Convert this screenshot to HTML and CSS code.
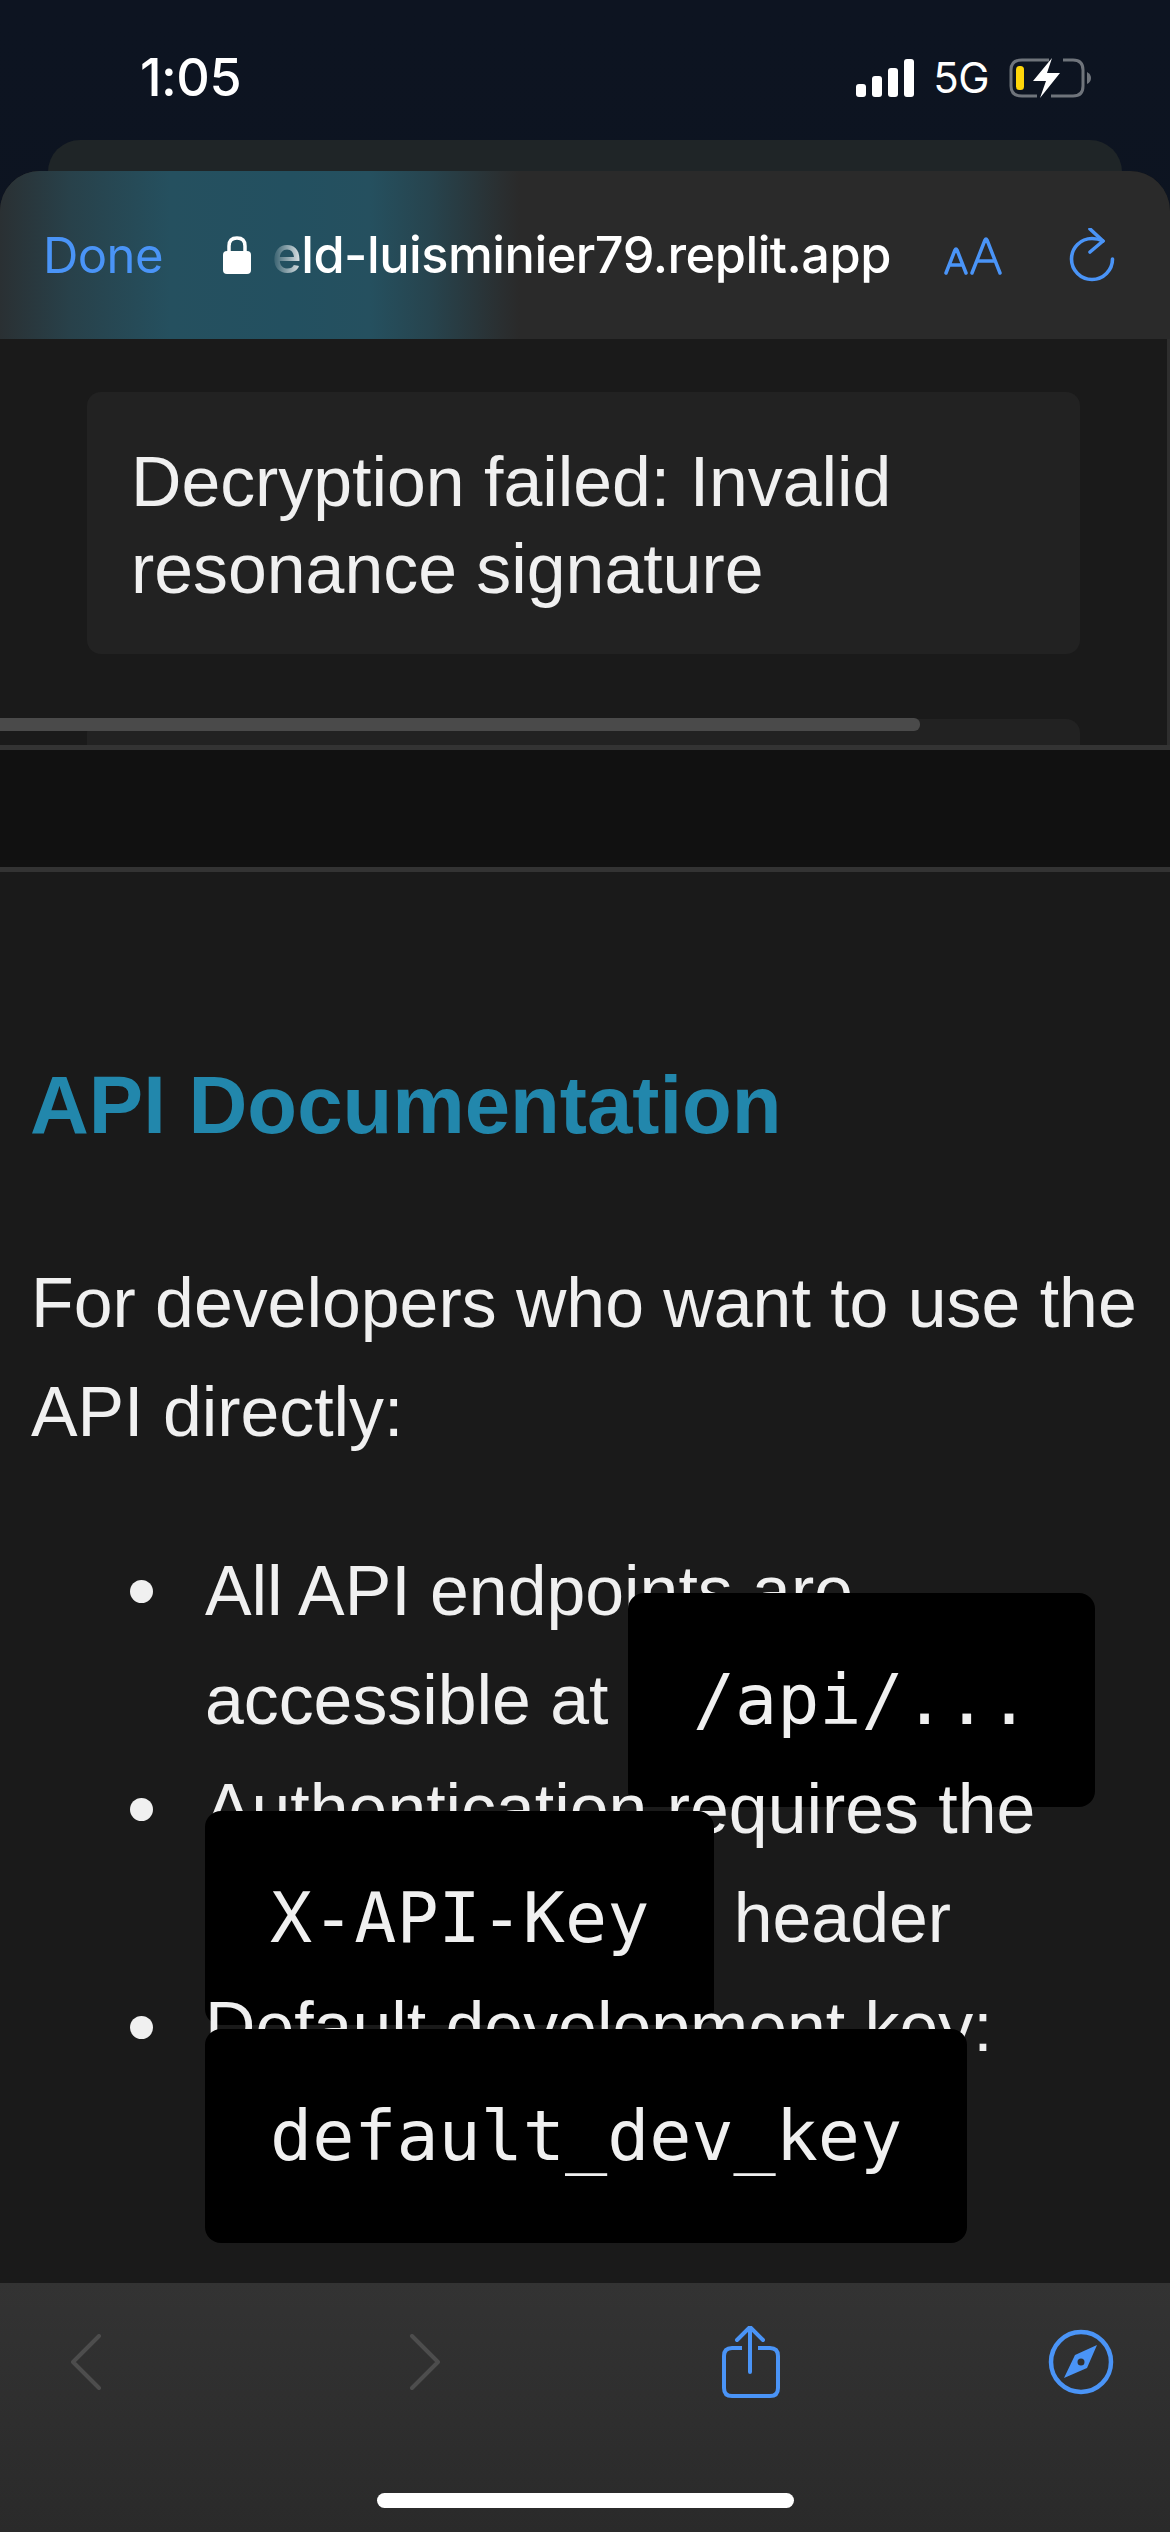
FILE: index.html
```html
<!DOCTYPE html>
<html>
<head>
  <meta charset="utf-8">
  <title>API Documentation</title>
  <link rel="stylesheet" href="styles.css">
</head>

<body>
<div class="phone">

  <div class="status">
    <span class="time">1:05</span>
    <div class="status-right">
      <svg class="signal" width="58" height="38" viewBox="0 0 58 38">
        <rect x="0" y="25" width="10" height="13" rx="3"/>
        <rect x="16" y="17" width="10" height="21" rx="3"/>
        <rect x="32" y="9" width="10" height="29" rx="3"/>
        <rect x="48" y="0" width="10" height="38" rx="3"/>
      </svg>
      <span class="net">5G</span>
      <svg class="battery" width="82" height="40" viewBox="0 0 82 40">
        <path d="M28 38H13Q2 38 2 28V12Q2 2 13 2H40M54 2H64Q74 2 74 12V28Q74 38 64 38H42" fill="none" stroke="#6f747b" stroke-width="3"/>
        <path d="M78 14Q82 16 82 20Q82 24 78 26Z" fill="#6f747b"/>
        <rect x="7" y="8" width="8" height="24" rx="3.5" fill="#ffd60a"/>
        <path d="M43 0L24 23H37L31 40L51 15H38Z" fill="#fff"/>
      </svg>
    </div>
  </div>
  <div class="peek"></div>

  <div class="sheet">
    <div class="navbar">
      <div class="glow"></div>
      <span class="done">Done</span>
      <div class="address">
        <svg class="lock" width="28" height="38" viewBox="0 0 28 38">
          <path d="M6 17V10Q6 2 14 2Q22 2 22 10V17" fill="none" stroke="#fff" stroke-width="3.5"/>
          <rect x="0" y="15" width="28" height="23" rx="4" fill="#fff"/>
        </svg>
        <div class="url-clip"><span class="url">eld-luisminier79.replit.app</span></div>
      </div>
      <svg class="aa" width="58" height="38" viewBox="0 0 58 38">
        <path d="M2 36L11 13Q12 11 13 13L22 36M6 28H18" fill="none" stroke="#4a94f7" stroke-width="3.5" stroke-linecap="round" stroke-linejoin="round"/>
        <path d="M28 36L41 3Q42 1 43 3L56 36M33 24H51" fill="none" stroke="#4a94f7" stroke-width="3.5" stroke-linecap="round" stroke-linejoin="round"/>
      </svg>
      <svg class="reload" width="46" height="54" viewBox="0 0 46 54">
        <path d="M43.5 31A20.5 20.5 0 1 1 23 10.5Q29 10.5 34 13" fill="none" stroke="#4a94f7" stroke-width="3.6" stroke-linecap="round"/>
        <path d="M21 1L34 13L21 24" fill="none" stroke="#4a94f7" stroke-width="3.6" stroke-linecap="round" stroke-linejoin="round"/>
      </svg>
    </div>

    <main class="content">
      <div class="result-pane">
        <div class="result-card">Decryption failed: Invalid resonance signature</div>
        <div class="result-card next"></div>
        <div class="scrollbar"></div>
      </div>
      <div class="band"></div>

      <h2 class="doc-title">API Documentation</h2>
      <p class="doc-text">For developers who want to use the API directly:</p>
      <ul class="doc-list">
        <li>All API endpoints are accessible at <code>/api/...</code></li>
        <li>Authentication requires the <code>X-API-Key</code> header</li>
        <li>Default development key: <code>default_dev_key</code></li>
      </ul>
    </main>

    <div class="toolbar">
      <div class="tool-icons">
        <svg class="tool-back" width="32" height="56" viewBox="0 0 32 56">
          <path d="M29 2L3 28L29 54" fill="none" stroke="#4d4d4d" stroke-width="4" stroke-linecap="round" stroke-linejoin="round"/>
        </svg>
        <svg class="tool-forward" width="32" height="56" viewBox="0 0 32 56">
          <path d="M3 2L29 28L3 54" fill="none" stroke="#4d4d4d" stroke-width="4" stroke-linecap="round" stroke-linejoin="round"/>
        </svg>
        <svg class="tool-share" width="58" height="72" viewBox="0 0 58 72">
          <path d="M20 22H10Q2 22 2 30V62Q2 70 10 70H48Q56 70 56 62V30Q56 22 48 22H36" fill="none" stroke="#4a94f7" stroke-width="4"/>
          <path d="M28 46V2M15 14L28 1L41 14" fill="none" stroke="#4a94f7" stroke-width="4" stroke-linecap="round" stroke-linejoin="round"/>
        </svg>
        <svg class="tool-compass" width="66" height="66" viewBox="0 0 66 66">
          <circle cx="33" cy="33" r="30" fill="none" stroke="#4a94f7" stroke-width="4.5"/>
          <path fill-rule="evenodd" d="M49 16L39 39L16 49L27 26ZM33 29.5A3.5 3.5 0 1 0 33 36.5A3.5 3.5 0 1 0 33 29.5Z" fill="#4a94f7"/>
        </svg>
      </div>
      <div class="home-bar"></div>
    </div>
  </div>

</div>
</body>
</html>
```

FILE: styles.css
```css
* {
  margin: 0;
  padding: 0;
  box-sizing: border-box;
}
html, body {
  background: #0c1420;
}
.phone {
  width: 1170px;
  height: 2532px;
  overflow: hidden;
  display: flex;
  flex-direction: column;
  background: linear-gradient(#0d1421, #0b141d);
}

/* status bar */
.status {
  height: 140px;
  flex: none;
  display: flex;
  justify-content: space-between;
  align-items: flex-start;
  padding: 50px 79px 0 140px;
  color: #fff;
  font-family: Inter, sans-serif;
}
.time {
  font-size: 52px;
  line-height: 56px;
  font-weight: 500;
  letter-spacing: -0.5px;
}
.status-right {
  display: flex;
  align-items: center;
  height: 40px;
  margin-top: 8px;
}
.signal {
  fill: #fff;
  margin-right: 19px;
}
.net {
  font-size: 42px;
  line-height: 40px;
  font-weight: 400;
  letter-spacing: -0.5px;
  margin-right: 20px;
}
.peek {
  height: 71px;
  flex: none;
  margin: 0 48px -40px;
  background: #1f2527;
  border-radius: 32px 32px 0 0;
}

/* safari sheet */
.sheet {
  flex: 1;
  min-height: 0;
  display: flex;
  flex-direction: column;
  position: relative;
  border-radius: 40px 40px 0 0;
  overflow: hidden;
  background: #1a1a1a;
}
.navbar {
  height: 168px;
  flex: none;
  position: relative;
  display: flex;
  align-items: center;
  padding: 0 0 0 43px;
  background: #2a2a2a;
  color: #fff;
  font-family: Inter, sans-serif;
}
.glow {
  position: absolute;
  top: 0;
  bottom: 0;
  left: 0;
  width: 520px;
  background: linear-gradient(90deg, #2a3033 0, #28414a 70px, #25505f 170px, #235060 290px, #25505f 370px, #27444e 430px, #2a2f31 500px, #2a2a2a 100%);
}
.done, .address, .aa, .reload {
  position: relative;
}
.done {
  width: 180px;
  font-size: 49px;
  letter-spacing: -0.6px;
  color: #4a94f7;
}
.address {
  display: flex;
  align-items: center;
  width: 721px;
  height: 64px;
}
.lock {
  margin-right: 21px;
  flex: none;
}
.url-clip {
  width: 625px;
  overflow: hidden;
  white-space: nowrap;
  -webkit-mask-image: linear-gradient(90deg, rgba(0, 0, 0, 0.05) 0, #000 34px);
  mask-image: linear-gradient(90deg, rgba(0, 0, 0, 0.05) 0, #000 34px);
}
.url {
  font-size: 50.5px;
  line-height: 64px;
  font-weight: 500;
  letter-spacing: -0.5px;
}
.aa {
  margin-top: 2px;
  margin-right: 67px;
}
.reload {
  margin-top: -1px;
}

/* page content */
.content {
  flex: 1;
  min-height: 0;
  overflow: hidden;
  background: #1a1a1a;
  color: #f0f0f0;
  font-family: "Liberation Sans", Arial, sans-serif;
}
.result-pane {
  height: 406px;
  position: relative;
  overflow: hidden;
  padding: 53px 87px 0;
  border-right: 3px solid #2e2e2e;
}
.result-card {
  width: 993px;
  height: 262px;
  padding: 47px 44px;
  background: #222;
  border-radius: 14px;
  font-size: 69.8px;
  line-height: 87px;
}
.result-card.next {
  margin-top: 65px;
}
.scrollbar {
  position: absolute;
  left: 0;
  top: 379px;
  width: 920px;
  height: 13px;
  background: #4a4a4a;
  border-radius: 0 6px 6px 0;
}
.band {
  height: 127px;
  background: #111;
  border-top: 5px solid #333;
  border-bottom: 5px solid #333;
}
.doc-title {
  margin: 188px 0 0 30px;
  font-size: 81.5px;
  line-height: 90px;
  font-weight: bold;
  color: #2287ac;
}
.doc-text {
  margin: 99px 16px 0 31px;
  font-size: 69.8px;
  line-height: 109px;
}
.doc-list {
  list-style: none;
  margin: 70px 0 0 205px;
  padding-right: 32px;
  font-size: 69.8px;
  line-height: 109px;
}
.doc-list li {
  position: relative;
}
.doc-list li::before {
  content: "";
  position: absolute;
  left: -75px;
  top: 43px;
  width: 23px;
  height: 23px;
  background: #f0f0f0;
  border-radius: 50%;
}
.doc-list code {
  padding: 66px 65px;
  background: #000;
  border-radius: 16px;
  font-family: "DejaVu Sans Mono", monospace;
  font-size: 70px;
  color: #f0f0f0;
}

/* bottom toolbar */
.toolbar {
  height: 249px;
  flex: none;
  background: linear-gradient(#333, #2a2a2a);
  position: relative;
}
.tool-icons {
  display: flex;
  align-items: center;
  height: 72px;
  margin-top: 43px;
  padding-left: 70px;
}
.tool-back {
  margin-right: 307px;
}
.tool-forward {
  margin-right: 281px;
}
.tool-share {
  margin-right: 268px;
}
.home-bar {
  width: 417px;
  height: 15px;
  margin: 95px auto 0;
  background: #fff;
  border-radius: 8px;
}
```
